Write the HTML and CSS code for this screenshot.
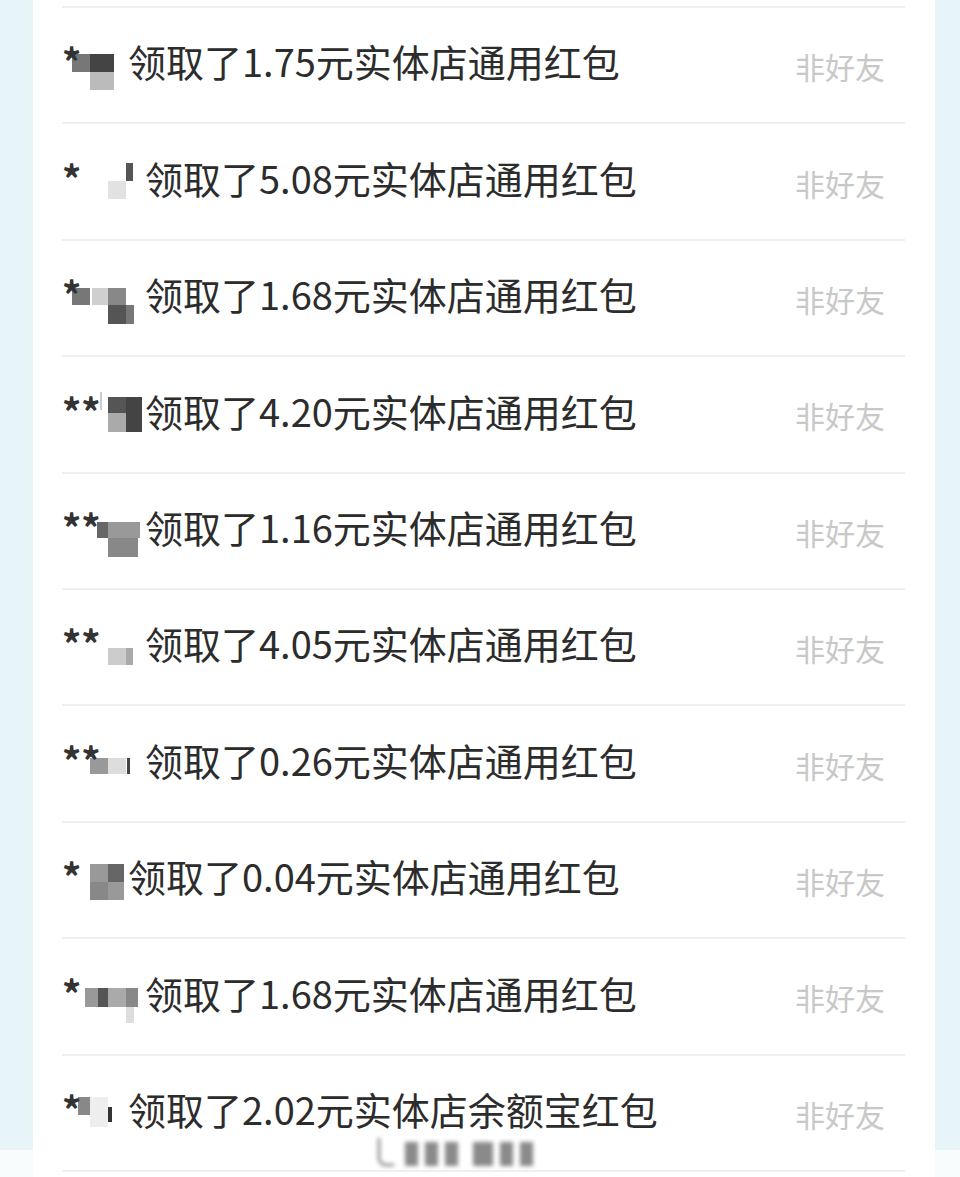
FILE: index.html
```html
<!DOCTYPE html>
<html lang="zh-CN">
<head>
  <meta charset="UTF-8" />
  <meta name="viewport" content="width=device-width, initial-scale=1.0">
  <title>红包领取记录</title>
  <link rel="stylesheet" href="styles.css">
</head>
<body>
  <div class="card">
    <ul class="list">
      <li class="row">
        <span class="name short m1">*</span>
        <span class="msg">领取了1.75元实体店通用红包</span>
        <span class="tag">非好友</span>
      </li>
      <li class="row">
        <span class="name m2">*</span>
        <span class="msg">领取了5.08元实体店通用红包</span>
        <span class="tag">非好友</span>
      </li>
      <li class="row">
        <span class="name m3">*</span>
        <span class="msg">领取了1.68元实体店通用红包</span>
        <span class="tag">非好友</span>
      </li>
      <li class="row">
        <span class="name m4">**</span>
        <span class="msg">领取了4.20元实体店通用红包</span>
        <span class="tag">非好友</span>
      </li>
      <li class="row">
        <span class="name m5">**</span>
        <span class="msg">领取了1.16元实体店通用红包</span>
        <span class="tag">非好友</span>
      </li>
      <li class="row">
        <span class="name m6">**</span>
        <span class="msg">领取了4.05元实体店通用红包</span>
        <span class="tag">非好友</span>
      </li>
      <li class="row">
        <span class="name m7">**</span>
        <span class="msg">领取了0.26元实体店通用红包</span>
        <span class="tag">非好友</span>
      </li>
      <li class="row">
        <span class="name short m8">*</span>
        <span class="msg">领取了0.04元实体店通用红包</span>
        <span class="tag">非好友</span>
      </li>
      <li class="row">
        <span class="name m9">*</span>
        <span class="msg">领取了1.68元实体店通用红包</span>
        <span class="tag">非好友</span>
      </li>
      <li class="row">
        <span class="name short m10">*</span>
        <span class="msg">领取了2.02元实体店余额宝红包</span>
        <span class="tag">非好友</span>
      </li>
    </ul>

    <div class="watermark">
      <span class="wm-hook"></span>
      <span class="wm-bar"></span>
      <span class="wm-bar"></span>
      <span class="wm-bar"></span>
      <span class="wm-bar wide"></span>
      <span class="wm-bar"></span>
      <span class="wm-bar"></span>
    </div>
  </div>
</body>
</html>
```

FILE: styles.css
```css
body {
  margin: 0;
  font-family: "Noto Sans CJK SC", "Noto Sans", sans-serif;
  background: linear-gradient(#e7f5f8 0, #e7f5f8 1150px, #f8fcfc 1150px);
  min-height: 1177px;
}

.card {
  position: relative;
  margin: 0 25px 0 33px;
  background: #fff;
  min-height: 1177px;
  padding: 6px 30px 0 29px;
  box-sizing: border-box;
}

.list {
  list-style: none;
  margin: 0;
  padding: 0;
  border-bottom: 2px solid #efefef;
}

.row {
  display: flex;
  align-items: center;
  height: 116.4px;
  box-sizing: border-box;
  border-top: 2px solid #efefef;
  padding: 0 20px 8px 0;
}

.name {
  display: flex;
  align-items: center;
  width: 83px;
  height: 64px;
  flex-shrink: 0;
  font-size: 38px;
  font-weight: bold;
  line-height: 1.2;
  color: #333;
  background-repeat: no-repeat;
}

.name.short {
  width: 66px;
}

.msg {
  flex: 1;
  font-size: 38px;
  line-height: 1.2;
  color: #2c2c2c;
  white-space: nowrap;
}

.tag {
  margin-top: 10px;
  font-size: 30px;
  line-height: 1.2;
  color: #c8c8c8;
}

/* mosaic over the nicknames */
.m1 {
  background-image:
    linear-gradient(#777, #777), linear-gradient(#444, #444), linear-gradient(#bbb, #bbb);
  background-position: 10px 25px, 28px 25px, 28px 43px;
  background-size: 18px 18px, 24px 18px, 24px 18px;
}

.m2 {
  background-image: linear-gradient(#555, #555), linear-gradient(#e2e2e2, #e2e2e2);
  background-position: 64px 17px, 46px 35px;
  background-size: 7px 18px, 18px 18px;
}

.m3 {
  background-image:
    linear-gradient(#777, #777), linear-gradient(#cfcfcf, #cfcfcf), linear-gradient(#888, #888),
    linear-gradient(#555, #555), linear-gradient(#777, #777);
  background-position: 10px 26px, 30px 26px, 46px 26px, 46px 43px, 64px 43px;
  background-size: 18px 17px, 16px 17px, 18px 17px, 18px 19px, 8px 19px;
}

.m4 {
  background-image:
    linear-gradient(#ccc, #ccc), linear-gradient(#555, #555), linear-gradient(#444, #444),
    linear-gradient(#aaa, #aaa);
  background-position: 38px 14px, 46px 19px, 64px 19px, 46px 35px;
  background-size: 2px 18px, 18px 16px, 16px 35px, 18px 19px;
}

.m5 {
  background-image: linear-gradient(#666, #666), linear-gradient(#999, #999), linear-gradient(#888, #888);
  background-position: 35px 27px, 46px 27px, 46px 43px;
  background-size: 11px 16px, 32px 16px, 30px 19px;
}

.m6 {
  background-image: linear-gradient(#ccc, #ccc), linear-gradient(#aaa, #aaa);
  background-position: 46px 37px, 64px 37px;
  background-size: 18px 17px, 7px 17px;
}

.m7 {
  background-image: linear-gradient(#999, #999), linear-gradient(#ddd, #ddd), linear-gradient(#444, #444);
  background-position: 28px 30px, 46px 30px, 65px 30px;
  background-size: 18px 16px, 18px 16px, 3px 16px;
}

.m8 {
  background-image:
    linear-gradient(#999, #999), linear-gradient(#666, #666), linear-gradient(#888, #888),
    linear-gradient(#999, #999);
  background-position: 28px 20px, 46px 20px, 28px 38px, 46px 38px;
  background-size: 18px 18px, 16px 18px, 18px 18px, 16px 18px;
}

.m9 {
  background-image:
    linear-gradient(#999, #999), linear-gradient(#555, #555), linear-gradient(#aaa, #aaa),
    linear-gradient(#888, #888), linear-gradient(#ddd, #ddd);
  background-position: 23px 28px, 36px 28px, 46px 28px, 64px 28px, 64px 47px;
  background-size: 13px 19px, 10px 19px, 18px 19px, 12px 19px, 8px 16px;
}

.m10 {
  background-image: linear-gradient(#888, #888), linear-gradient(#eee, #eee), linear-gradient(#333, #333);
  background-position: 16px 20px, 28px 20px, 46px 30px;
  background-size: 12px 18px, 18px 30px, 4px 15px;
}

/* blurred signature at the bottom */
.watermark {
  position: absolute;
  left: 345px;
  top: 1138px;
  display: flex;
  align-items: flex-end;
  gap: 7px;
  filter: blur(2px);
}

.wm-hook {
  width: 14px;
  height: 26px;
  border-left: 2px solid #666;
  border-bottom: 2px solid #666;
  border-radius: 0 0 0 8px;
  margin-right: 4px;
}

.wm-bar {
  width: 13px;
  height: 24px;
  background: #8a8a8a;
}

.wm-bar.wide {
  width: 20px;
  margin-left: 8px;
}
```
